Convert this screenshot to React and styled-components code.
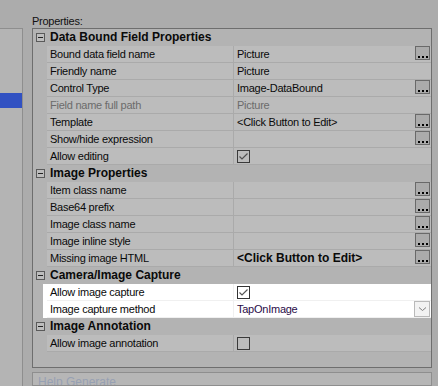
import React from 'react'
import styled, { createGlobalStyle } from 'styled-components'

const LINE = '#aaaaaa';

const GlobalStyle = createGlobalStyle`
  html, body {
    margin: 0;
    padding: 0;
    background: #acacac;
  }
  body {
    width: 438px;
    height: 386px;
    overflow: hidden;
    font-family: "Liberation Sans", Arial, sans-serif;
    font-size: 11px;
    letter-spacing: -0.25px;
    color: #000;
  }
`;

const Page = styled.div`
  display: flex;
  height: 386px;
`;

const LeftPane = styled.div`
  width: 22px;
  margin-top: 28px;
  padding-top: 64px;
  background: #b4b4b4;
  border-top: 1px solid #8e8e8e;
  border-right: 1px solid #8e8e8e;
`;

const Selection = styled.div`
  height: 15px;
  background: #3151c2;
`;

const Main = styled.div`
  display: flex;
  flex-direction: column;
  width: 400px;
  margin-left: 9px;
  min-height: 0;
`;

const Label = styled.div`
  height: 28px;
  flex-shrink: 0;
  box-sizing: border-box;
  display: flex;
  align-items: flex-end;
  padding-bottom: 1px;
  color: #111;
`;

const Grid = styled.div`
  display: flex;
  flex-direction: column;
  flex-shrink: 0;
  height: 340px;
  box-sizing: border-box;
  border: 1px solid #6e6e6e;
  background: #b3b3b3;
`;

const Row = styled.div`
  display: flex;
  height: 17px;
  flex-shrink: 0;
`;

const Gutter = styled.div`
  width: 14px;
  flex-shrink: 0;
  display: flex;
  align-items: center;
  background: ${p => p.$lit ? 'linear-gradient(to right, #b3b3b3 10px, #fff 10px)' : '#b3b3b3'};
`;

const Expander = styled.div`
  position: relative;
  width: 7px;
  height: 7px;
  margin-left: 3px;
  border: 1px solid #5a5a5a;
  background: #bdbdbd;
  &::after {
    content: '';
    position: absolute;
    left: 1px;
    top: 3px;
    width: 5px;
    height: 1px;
    background: #222;
  }
`;

const CategoryTitle = styled.div`
  padding-left: 3px;
  font-weight: bold;
  font-size: 12px;
  letter-spacing: 0;
  line-height: 17px;
  white-space: nowrap;
  color: #0a0a0a;
`;

const NameCell = styled.div`
  width: 187px;
  flex-shrink: 0;
  box-sizing: border-box;
  padding-left: 3px;
  line-height: 16px;
  white-space: nowrap;
  overflow: hidden;
  background: ${p => p.$lit ? '#fff' : '#bcbcbc'};
  border-right: 1px solid ${p => p.$lit ? '#f0f0f0' : LINE};
  border-bottom: 1px solid ${p => p.$lit ? '#f0f0f0' : LINE};
  color: ${p => p.$disabled ? '#6b6b6b' : '#0a0a0a'};
`;

const ValueCell = styled.div`
  flex: 1;
  display: flex;
  align-items: center;
  justify-content: space-between;
  box-sizing: border-box;
  padding-left: 3px;
  padding-right: 1px;
  white-space: nowrap;
  background: ${p => p.$lit ? '#fff' : '#bcbcbc'};
  border-bottom: 1px solid ${p => p.$lit ? '#f0f0f0' : LINE};
  color: ${p => p.$disabled ? '#6b6b6b' : p.$accent ? '#2a0c48' : '#0a0a0a'};
  font-weight: ${p => p.$bold ? 'bold' : 'normal'};
  font-size: ${p => p.$bold ? '12px' : '11px'};
  letter-spacing: ${p => p.$bold ? '0' : '-0.25px'};
`;

const EllipsisButton = styled.div`
  width: 13px;
  height: 11px;
  display: flex;
  align-items: flex-end;
  justify-content: center;
  gap: 2px;
  padding-bottom: 1px;
  box-sizing: content-box;
  border: 1px solid #696969;
  background: #ababab;
  margin-top: -2px;
`;

const Dot = styled.span`
  width: 2px;
  height: 2px;
  background: #000;
`;

const DropButton = styled.div`
  width: 16px;
  height: 16px;
  box-sizing: border-box;
  display: flex;
  align-items: center;
  justify-content: center;
  border: 1px solid #b9b9b9;
  background: #f2f2f2;
`;

const CheckBox = styled.div`
  width: 13px;
  height: 13px;
  box-sizing: border-box;
  border: 1px solid ${p => p.$lit ? '#333' : '#3a3a3a'};
  display: flex;
  align-items: center;
  justify-content: center;
`;

const Filler = styled.div`
  flex: 1;
`;

const HelpBox = styled.div`
  flex: 1;
  min-height: 0;
  overflow: hidden;
  margin-top: 4px;
  padding: 2px 5px;
  border: 1px solid #8e8e8e;
  background: #b6b6b6;
  color: #96a0b3;
  font-size: 12px;
  letter-spacing: 0;
`;

function Check({ checked, lit }) {
  return (
    <CheckBox $lit={lit}>
      {checked && (
        <svg width="11" height="11" viewBox="0 0 11 11">
          <path d="M1.5 5.5 L4 8 L9.5 2.5" fill="none" stroke={lit ? '#555' : '#505050'} strokeWidth="1.2" />
        </svg>
      )}
    </CheckBox>
  );
}

function Ellipsis() {
  return (
    <EllipsisButton>
      <Dot /><Dot /><Dot />
    </EllipsisButton>
  );
}

function Category({ title }) {
  return (
    <Row>
      <Gutter><Expander /></Gutter>
      <CategoryTitle>{title}</CategoryTitle>
    </Row>
  );
}

function Property({ name, value, disabled, bold, button, check, lit, accent }) {
  return (
    <Row>
      <Gutter $lit={lit} />
      <NameCell $lit={lit} $disabled={disabled}>{name}</NameCell>
      <ValueCell $lit={lit} $disabled={disabled} $bold={bold} $accent={accent}>
        {check !== undefined ? <Check checked={check} lit={lit} /> : <span>{value}</span>}
        {button === 'ellipsis' && <Ellipsis />}
        {button === 'drop' && (
          <DropButton>
            <svg width="9" height="6" viewBox="0 0 9 6">
              <path d="M1 1.5 L4.5 4.5 L8 1.5" fill="none" stroke="#808080" strokeWidth="1" />
            </svg>
          </DropButton>
        )}
      </ValueCell>
    </Row>
  );
}

const sections = [
  {
    title: 'Data Bound Field Properties',
    props: [
      { name: 'Bound data field name', value: 'Picture', button: 'ellipsis' },
      { name: 'Friendly name', value: 'Picture' },
      { name: 'Control Type', value: 'Image-DataBound', button: 'ellipsis' },
      { name: 'Field name full path', value: 'Picture', disabled: true },
      { name: 'Template', value: '<Click Button to Edit>', button: 'ellipsis' },
      { name: 'Show/hide expression', value: '', button: 'ellipsis' },
      { name: 'Allow editing', check: true },
    ],
  },
  {
    title: 'Image Properties',
    props: [
      { name: 'Item class name', value: '', button: 'ellipsis' },
      { name: 'Base64 prefix', value: '', button: 'ellipsis' },
      { name: 'Image class name', value: '', button: 'ellipsis' },
      { name: 'Image inline style', value: '', button: 'ellipsis' },
      { name: 'Missing image HTML', value: '<Click Button to Edit>', bold: true, button: 'ellipsis' },
    ],
  },
  {
    title: 'Camera/Image Capture',
    props: [
      { name: 'Allow image capture', check: true, lit: true },
      { name: 'Image capture method', value: 'TapOnImage', button: 'drop', lit: true, accent: true },
    ],
  },
  {
    title: 'Image Annotation',
    props: [
      { name: 'Allow image annotation', check: false },
    ],
  },
];

export default function App() {
  return (
    <>
      <GlobalStyle />
      <Page>
        <LeftPane>
          <Selection />
        </LeftPane>
        <Main>
          <Label>Properties:</Label>
          <Grid>
            {sections.map(section => (
              <React.Fragment key={section.title}>
                <Category title={section.title} />
                {section.props.map(p => <Property key={p.name} {...p} />)}
              </React.Fragment>
            ))}
            <Filler />
          </Grid>
          <HelpBox>Help Generate</HelpBox>
        </Main>
      </Page>
    </>
  );
}
